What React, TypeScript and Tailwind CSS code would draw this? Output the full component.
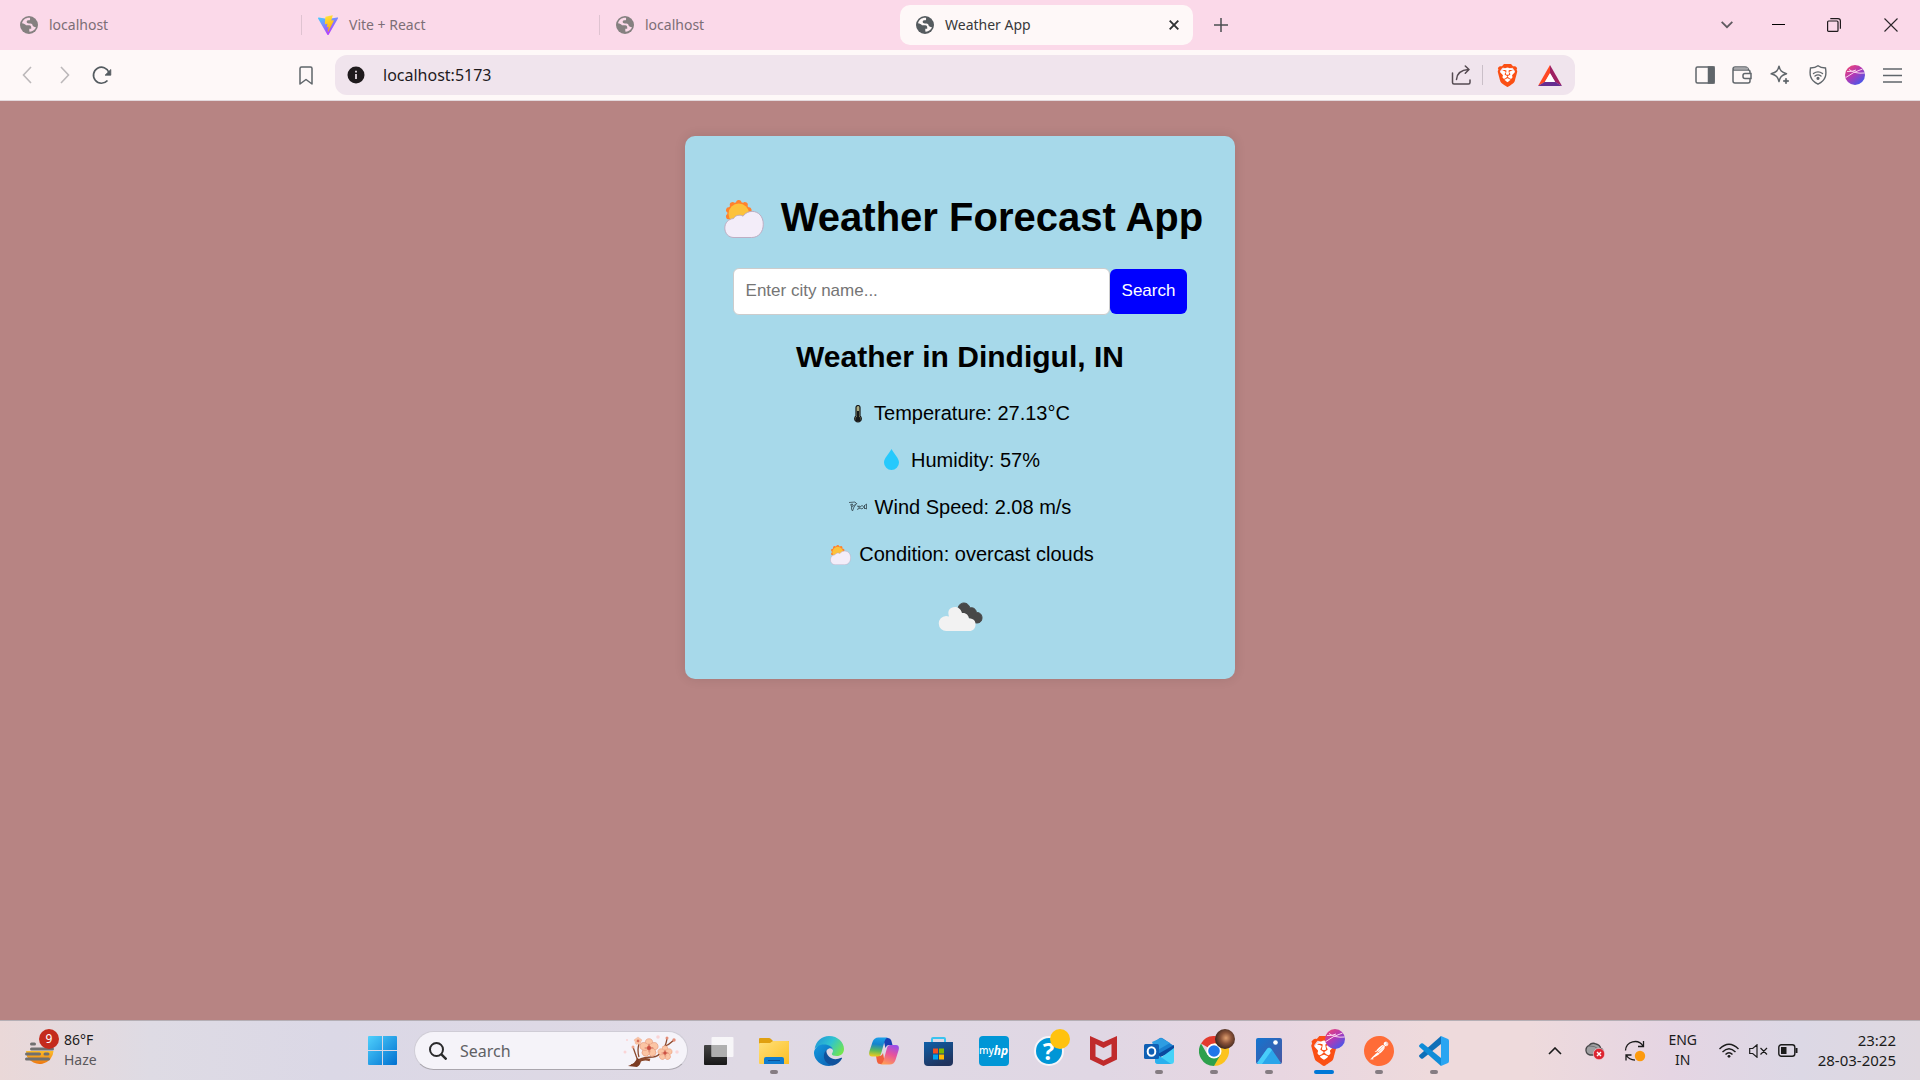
import React, { ReactNode } from "react";
import { SiBrave, SiPostman } from "react-icons/si";

const ui = "font-['Noto_Sans','Open_Sans',sans-serif]";
const arial = "font-['Liberation_Sans',Arial,sans-serif]";

function Globe({ land }: { land: string }) {
  return (
    <svg viewBox="0 0 18 18" className="size-[18px]" aria-hidden="true">
      <circle cx="9" cy="9" r="9" fill="currentColor" />
      <path
        d="M10 1.800C6 1.400 3 3.600 2 7.200c1.800.2 3.200.9 4 2h3.200c1.200 0 2 .8 2 2v1.600H9.300v2.800c3 .3 5.800-1.600 6.700-4.300-2-.3-3.300-.8-3.500-2.300-.2-1.300-1.500-1.500-3.500-1.500-1.600 0-2.300-.8-2.300-1.700 0-1.300 1.100-1.500 2.300-1.500 1 0 1.300-.6 1-2.500z"
        fill={land}
      />
    </svg>
  );
}

function ViteLogo() {
  return (
    <svg viewBox="0 0 32 32" className="size-5" aria-hidden="true">
      <defs>
        <linearGradient id="viteA" x1="0" y1="0" x2="0.6" y2="1">
          <stop offset="0" stopColor="#41d1ff" />
          <stop offset="1" stopColor="#bd34fe" />
        </linearGradient>
        <linearGradient id="viteB" x1="0.4" y1="0" x2="0.6" y2="1">
          <stop offset="0" stopColor="#ffea83" />
          <stop offset="0.1" stopColor="#ffdd35" />
          <stop offset="1" stopColor="#ffa800" />
        </linearGradient>
      </defs>
      <path fill="url(#viteA)" d="M31.9 5.6 17 31.4a1.2 1.2 0 0 1-2 0L.1 5.6c-.5-.9.3-1.900 1.200-1.700L16 6.500l14.700-2.700c1-.1 1.700.9 1.200 1.800z" />
      <path fill="url(#viteB)" d="M23 .3 12 2.500c-.2 0-.3.2-.3.4L11 14.300c0 .3.200.5.500.5l3-.7c.3-.1.600.2.500.5l-.9 4.400c-.1.300.2.600.5.500l1.900-.6c.3-.1.600.2.500.5l-1.400 6.900c-.1.400.5.700.7.300l9.200-17.800c.2-.3-.1-.600-.4-.500l-3.200.6c-.3.100-.600-.2-.500-.5L23.500.8c.1-.3-.2-.6-.5-.5z" />
    </svg>
  );
}

function Tab({ title, icon, active, last }: { title: string; icon: ReactNode; active?: boolean; last?: boolean }) {
  if (active) {
    return (
      <div className="ml-0.5 flex h-10 w-[293px] items-center rounded-[10px] bg-[#fef8f8] pl-4 pr-[11px]">
        <span className="text-[#555b5f]">{icon}</span>
        <span className="ml-[11px] text-sm text-[#38393b]">{title}</span>
        <button aria-label="Close tab" className="ml-auto flex size-4 items-center justify-center">
          <svg viewBox="0 0 10 10" className="size-2.5" stroke="#303234" strokeWidth="1.9">
            <path d="M.7.7 9.300 9.300M9.300.7.7 9.300" />
          </svg>
        </button>
      </div>
    );
  }
  return (
    <div className="flex h-10 w-[298px] items-center pl-4">
      <span className="text-[#858080]">{icon}</span>
      <span className="ml-[11px] text-sm text-[#7b6e76]">{title}</span>
      {!last && <span className="ml-auto h-5 w-px bg-[#dfc3d1]" />}
    </div>
  );
}

function BraveMark({ size }: { size: string }) {
  return (
    <span className={`relative flex items-center justify-center ${size}`}>
      <span className="absolute inset-[18%] rounded-full bg-white" />
      <SiBrave className="relative size-full text-[#fb4f14]" />
    </span>
  );
}

function Sphere({ className, id }: { className: string; id: string }) {
  return (
    <svg viewBox="0 0 20 20" className={className} aria-hidden="true">
      <defs>
        <linearGradient id={id} x1="0" y1="0" x2="0.8" y2="1">
          <stop offset="0" stopColor="#f8466a" />
          <stop offset="0.5" stopColor="#b339b4" />
          <stop offset="1" stopColor="#3c5af0" />
        </linearGradient>
      </defs>
      <circle cx="10" cy="10" r="10" fill={`url(#${id})`} />
      <path d="M.8 12.500Q8 7 17.500 4M4 4.500q6 4.500 15.500 3.500M2 6.500q5 .5 9-1.500" stroke="#fbd5ef" strokeWidth="1" fill="none" />
    </svg>
  );
}

function BrowserChrome() {
  return (
    <header className={ui}>
      <div className="flex h-[50px] items-center bg-[#fbd9e9] pl-1">
        <Tab title="localhost" icon={<Globe land="#fbd9e9" />} />
        <Tab title="Vite + React" icon={<ViteLogo />} />
        <Tab title="localhost" icon={<Globe land="#fbd9e9" />} last />
        <Tab title="Weather App" icon={<Globe land="#fef8f8" />} active />
        <button aria-label="New tab" className="ml-[21px]">
          <svg viewBox="0 0 14 14" className="size-3.5" stroke="#4b4d50" strokeWidth="1.500">
            <path d="M7 0v14M0 7h14" />
          </svg>
        </button>
        <div className="ml-auto flex items-center">
          <button aria-label="Search tabs" className="flex w-[46px] justify-center">
            <svg viewBox="0 0 14 9" className="h-2 w-3.5" fill="none" stroke="#5f5a60" strokeWidth="2">
              <path d="m1 1 6 6 6-6" />
            </svg>
          </button>
          <button aria-label="Minimize" className="flex w-14 justify-center">
            <span className="mb-0.5 h-px w-[13px] bg-black" />
          </button>
          <button aria-label="Restore" className="flex w-14 justify-center">
            <svg viewBox="0 0 14 14" className="size-3.5" fill="none" stroke="#1f1a1d" strokeWidth="1.200">
              <rect x=".6" y="3" width="10.400" height="10.400" rx="1" />
              <path d="M3.300.600h7.700a2.400 2.400 0 0 1 2.400 2.400v7.700" />
            </svg>
          </button>
          <button aria-label="Close" className="flex w-[58px] justify-center">
            <svg viewBox="0 0 14 14" className="size-3.5" stroke="#2b2529" strokeWidth="1.100">
              <path d="m.5.5 13 13M13.500.5l-13 13" />
            </svg>
          </button>
        </div>
      </div>

      <div className="flex h-[51px] items-center border-b border-[#e3d9dd] bg-[#fef8f8]">
        <button aria-label="Back" className="ml-2 flex w-[38px] justify-center">
          <svg viewBox="0 0 10 18" className="h-[18px] w-2.5" fill="none" stroke="#bcb8ba" strokeWidth="1.600">
            <path d="M9 1 1.500 9 9 17" />
          </svg>
        </button>
        <button aria-label="Forward" className="flex w-[38px] justify-center">
          <svg viewBox="0 0 10 18" className="h-[18px] w-2.5" fill="none" stroke="#bcb8ba" strokeWidth="1.600">
            <path d="M1 1l7.500 8L1 17" />
          </svg>
        </button>
        <button aria-label="Reload" className="flex w-9 justify-center">
          <svg viewBox="0 0 20 20" className="size-5" fill="none" stroke="#545b60" strokeWidth="1.700">
            <path d="M17 7.500A8 8 0 1 0 15.500 15.500" />
            <path d="M18.800 4.500v5.700h-5.700z" fill="#545b60" stroke="#545b60" strokeWidth=".8" strokeLinejoin="round" />
          </svg>
        </button>
        <button aria-label="Bookmark" className="ml-[174px] flex w-6 justify-center">
          <svg viewBox="0 0 14 19" className="h-[19px] w-3.5" fill="none" stroke="#5f656a" strokeWidth="1.500" strokeLinejoin="round">
            <path d="M1 2.500A1.500 1.500 0 0 1 2.500 1h9A1.500 1.500 0 0 1 13 2.500V18l-6-4.500L1 18z" />
          </svg>
        </button>
        <div className="ml-[17px] flex h-10 max-w-[1240px] flex-1 items-center rounded-xl bg-[#f0e4ed] pl-3 pr-2.5">
          <svg viewBox="0 0 18 18" className="size-[18px]" aria-hidden="true">
            <circle cx="9" cy="9" r="8.500" fill="#1f1a1d" />
            <path d="M9 8v5M9 4.800v1.700" stroke="#f0e4ed" strokeWidth="1.700" />
          </svg>
          <input
            aria-label="Address"
            defaultValue="localhost:5173"
            className="ml-[18px] min-w-0 flex-1 bg-transparent text-base text-[#1f1a1d] outline-none"
          />
          <button aria-label="Share">
            <svg viewBox="0 0 20 20" className="size-5" fill="none" stroke="#544a51" strokeWidth="1.500" strokeLinecap="round" strokeLinejoin="round">
              <path d="M1.500 8v9.500q0 1.500 1.500 1.500h14.500q1.500 0 1.500-1.500V15" />
              <path d="M5.500 14.500C6 8 10 5 17.500 4.500M14.300 1l3.700 3.500-3.700 3.700" />
            </svg>
          </button>
          <span className="mx-[11px] h-5 w-px bg-[#cabfc8]" />
          <button aria-label="Brave Shields" className="ml-[2px]">
            <BraveMark size="size-[23px]" />
          </button>
          <button aria-label="Brave Rewards" className="ml-[19px] mr-[3px]">
            <svg viewBox="0 0 24 21" className="h-[21px] w-6" aria-hidden="true">
              <path d="M12 0 0 21l7-4 5-8.500z" fill="#ff4724" />
              <path d="m12 0 12 21-7-4-5-8.500z" fill="#9e1f63" />
              <path d="M0 21h24l-7-4.200H7z" fill="#662d91" />
              <path d="M12 8 6.800 17h10.400z" fill="#fff" />
            </svg>
          </button>
        </div>
        <div className="ml-auto flex items-center pr-[9px] text-[#60666b]">
          <button aria-label="Sidebar" className="flex w-[37px] justify-center">
            <svg viewBox="0 0 20 18" className="h-[18px] w-5" fill="none" stroke="currentColor" strokeWidth="1.500">
              <rect x="1" y="1" width="18" height="16" rx="1.500" />
              <path d="M13.500 1H19v16h-5.500z" fill="currentColor" />
            </svg>
          </button>
          <button aria-label="Wallet" className="flex w-[38px] justify-center">
            <svg viewBox="0 0 20 18" className="h-[18px] w-5" fill="none" stroke="currentColor" strokeWidth="1.500">
              <path d="M1 3.500V15q0 2 2 2h13q2 0 2-2V6q0-2-2-2H3.500Q1 4 1 2.700T3 1h10q3 0 3.500 3" />
              <path d="M19 7.500h-6q-2 0-2 2v1q0 2 2 2h6z" fill="#fef8f8" />
              <path d="M2 2.500h14" strokeWidth="2" stroke="#a8a9ac" />
            </svg>
          </button>
          <button aria-label="Leo AI" className="flex w-[38px] justify-center">
            <svg viewBox="0 0 20 20" className="size-5" fill="none" stroke="currentColor" strokeWidth="1.500" strokeLinejoin="round">
              <path d="M9 1.200c1 4.500 2.500 6 7.500 7.600-5 1.500-6.500 3.200-7.500 7.800-1-4.600-2.700-6.300-7.800-7.800C6.300 7.200 8 5.700 9 1.200z" />
              <path d="M16 13c.5 2 1 2.500 3 3-2 .5-2.500 1-3 3-.5-2-1-2.500-3-3 2-.5 2.500-1 3-3z" fill="currentColor" strokeWidth=".8" />
            </svg>
          </button>
          <button aria-label="VPN" className="flex w-[37px] justify-center">
            <svg viewBox="0 0 18 20" className="h-5 w-[18px]" fill="none" stroke="currentColor" strokeWidth="1.400" strokeLinecap="round">
              <path d="M9 .8C7 2.500 4 3 1.500 3 .5 9 .5 15 9 19.200 17.500 15 17.500 9 16.500 3 14 3 11 2.500 9 .8z" />
              <path d="M4.500 8.500q4.500-3.200 9 0M6 11q3-2.200 6 0" />
              <circle cx="9" cy="13.300" r=".9" fill="currentColor" />
            </svg>
          </button>
          <button aria-label="Profile" className="flex w-[37px] justify-center">
            <Sphere className="size-5" id="sphereTop" />
          </button>
          <button aria-label="Menu" className="flex w-[38px] justify-center">
            <svg viewBox="0 0 19 15" className="h-[15px] w-[19px]" stroke="currentColor" strokeWidth="1.500">
              <path d="M0 1h19M0 7.500h19M0 14h19" />
            </svg>
          </button>
        </div>
      </div>
    </header>
  );
}

function SunCloud({ className }: { className: string }) {
  return (
    <svg viewBox="0 0 42 40" className={className} aria-hidden="true">
      <g fill="#ff822d">
        <circle cx="15.500" cy="14" r="12" />
        {[0, 36, 72, 108, 144, 180, 216, 252, 288, 324].map((a) => (
          <circle key={a} cx="15.500" cy="2.800" r="2.800" transform={`rotate(${a} 15.500 14)`} />
        ))}
      </g>
      <circle cx="15.500" cy="14.500" r="10.800" fill="#fcc23c" />
      <path
        d="M10.500 39.500C4.500 39.500.8 35 .8 29.500S4.500 20 10 19.500c2-3.500 6.500-4.500 10-2.500 2.500-3.500 6-5 9.500-5 7 0 11.800 5.500 11.800 13.500S36.500 39.500 29 39.500z"
        fill="#f3edf9"
        stroke="#bdabc0"
        strokeWidth="1"
      />
    </svg>
  );
}

function Row({ icon, children }: { icon: ReactNode; children: ReactNode }) {
  return (
    <p className="flex h-[27px] items-center justify-center text-xl">
      {icon}
      <span>{children}</span>
    </p>
  );
}

function WeatherCard() {
  return (
    <section className="flex w-[550px] flex-col items-center rounded-[10px] bg-[#a7d9ea] px-6 pb-[30px] pt-[57px] text-black shadow-[0_0_12px_rgba(0,0,0,0.1)]">
      <h1 className="flex h-12 items-center whitespace-nowrap pl-[7px] text-[40px] font-bold">
        <SunCloud className="mr-[17px] mt-1 h-[38px] w-10" />
        Weather Forecast App
      </h1>
      <form className="mt-[27px] flex items-center" onSubmit={(e) => e.preventDefault()}>
        <input
          aria-label="City name"
          placeholder="Enter city name..."
          className="h-[47px] w-[377px] rounded-md border border-[#ccc] bg-white px-3 pb-0.5 text-[17px] leading-5 outline-none placeholder:text-[#757575]"
        />
        <button className="h-[45px] rounded-md bg-[#0000ff] px-3 pb-0.5 text-[17px] text-white">Search</button>
      </form>
      <h2 className="mt-6 text-[30px] font-bold leading-9">Weather in Dindigul, IN</h2>
      <div className="mt-6 flex flex-col gap-5">
        <Row
          icon={
            <svg viewBox="0 0 8 18" className="ml-1 mr-3 mt-0.5 h-[18px] w-2" aria-hidden="true">
              <path d="M2 2.500a2 2 0 0 1 4 0V11a3.300 3.300 0 1 1-4 0z" fill="#a9aa80" stroke="#17191a" strokeWidth="1.200" />
              <path d="M4 6v7" stroke="#17191a" strokeWidth="2" />
              <circle cx="4" cy="14" r="2.600" fill="#17191a" />
            </svg>
          }
        >
          Temperature: 27.13°C
        </Row>
        <Row
          icon={
            <svg viewBox="0 0 15 21" className="ml-1 mr-3 h-[21px] w-[15px]" aria-hidden="true">
              <path d="M7.500 0C10 5 15 9 15 13.500a7.500 7.500 0 0 1-15 0C0 9 5 5 7.500 0z" fill="#26c9fc" />
            </svg>
          }
        >
          Humidity: 57%
        </Row>
        <Row
          icon={
            <svg viewBox="0 0 18 12" className="mr-2 h-3 w-[18px]" fill="none" stroke="#3f555e" strokeWidth=".9" aria-hidden="true">
              <path d="M0 1.500 6 1l1.500 1.500L5 4.500 2 6M1 4l3-.5M3 2.500 2.500 8l1 2L5 6l3-4M8 5l3 1 2-1.500 1.500 1L17.500 3v5l-3-1.500L13 8l-2-1-3 1.500M10 4.500v3M15.500 4v4" />
            </svg>
          }
        >
          Wind Speed: 2.08 m/s
        </Row>
        <Row icon={<SunCloud className="ml-1 mr-2 mt-0.5 h-5 w-[21px]" />}>Condition: overcast clouds</Row>
      </div>
      <svg viewBox="0 0 62 62" className="mt-5 size-[62px]" role="img" aria-label="overcast clouds">
        <path d="M29 23c0-4 2-7 6-7 3 0 5 2 6 5 3-1 6 1 6.500 4.500 4 0 5.500 2.500 5.500 5.500s-2 5-5 5c-3 0-5-1-6-4z" fill="#484848" stroke="#484848" />
        <path d="M17.500 44a7.500 7.500 0 0 1-.5-15c1 0 2 .2 3 .5C18 23.500 21 20 26 20c3.500 0 6 2.500 7 6 4-.5 6.500 2 7 5.500 5 0 6.500 2.500 6.500 6 0 4-2.500 6.500-6 6.500z" fill="#f2f2f2" />
      </svg>
    </section>
  );
}

function AppButton({ label, state, children }: { label: string; state?: "open" | "active"; children: ReactNode }) {
  return (
    <button aria-label={label} className="relative flex h-full w-[55px] items-center justify-center">
      {children}
      {state === "open" && <span className="absolute bottom-1.5 h-1 w-2 rounded-full bg-[#857c82]" />}
      {state === "active" && <span className="absolute bottom-1.5 h-1 w-5 rounded-full bg-[#0078d7]" />}
    </button>
  );
}

function Blossom({ x, y, r }: { x: number; y: number; r: number }) {
  return (
    <g transform={`translate(${x} ${y}) scale(${r})`}>
      {[0, 72, 144, 216, 288].map((a) => (
        <ellipse key={a} cx="0" cy="-3.400" rx="2.600" ry="3" transform={`rotate(${a})`} fill="#fbc5a4" stroke="#e9a184" strokeWidth=".5" />
      ))}
      <circle r="1.500" fill="#d9604c" />
      <path d="M0-3v6M-3 0h6" stroke="#b8403a" strokeWidth=".4" />
    </g>
  );
}

function Taskbar() {
  return (
    <footer
      className={`flex h-[60px] items-center border-t border-[#b5afb5] bg-[linear-gradient(90deg,#ead8d8_0px,#dedbe4_150px,#dbd8e6_330px,#dfd9e4_750px,#e0d7e4_1100px,#e8d6e1_1280px,#eedadc_1430px,#eedadc_1530px,#e5d5e3_1670px,#dcd8e5_1800px,#dfd8e0_1920px)] ${ui}`}
    >
      <button aria-label="Weather, 86 degrees, haze" className="flex h-full w-[355px] items-center pl-6 text-left">
        <span className="relative flex h-9 w-10">
          <svg viewBox="0 0 40 36" className="h-9 w-10" aria-hidden="true">
            <defs>
              <linearGradient id="haze" x1="0" y1="0" x2="0" y2="1">
                <stop offset="0" stopColor="#fcbc2a" />
                <stop offset="1" stopColor="#ee7810" />
              </linearGradient>
            </defs>
            <path d="M2 18h27.500a14 13.500 0 0 1-26.500 5.500z" fill="url(#haze)" />
            <g stroke="#707070" strokeWidth="3" strokeLinecap="round">
              <path d="M7.500 11h3M7.500 16h21M2.500 21h13M21 21h3M2.500 26h22" />
            </g>
          </svg>
          <span className="absolute left-[15px] top-[-4px] flex size-5 items-center justify-center rounded-full bg-[#c42b1c] text-xs text-white">9</span>
        </span>
        <span className="mb-0.5 flex flex-col text-sm leading-5 text-[#1b1b1b]">
          <span>86°F</span>
          <span className="text-[#5b585c]">Haze</span>
        </span>
      </button>

      <AppButton label="Start">
        <svg viewBox="0 0 29 29" className="size-[29px]">
          <defs>
            <linearGradient id="win" x1="0" y1="0" x2="1" y2="1">
              <stop offset="0" stopColor="#4fd0fc" />
              <stop offset="1" stopColor="#0070d0" />
            </linearGradient>
          </defs>
          <path fill="url(#win)" d="M1 0h13v14H0V1q0-1 1-1zM15 0h13q1 0 1 1v13H15zM0 15h14v14H1q-1 0-1-1zM15 15h14v13q0 1-1 1H15z" />
        </svg>
      </AppButton>
      <label className="ml-1 flex h-[39px] w-[274px] items-center overflow-hidden rounded-full border border-b-[#aaa6ae] border-[#cfccd6] bg-[#f5f3f9] pl-3.5 pr-2">
        <svg viewBox="0 0 18 18" className="size-[18px]" fill="none" stroke="#2a2a2c" strokeWidth="2" aria-hidden="true">
          <circle cx="7.500" cy="7.500" r="6.500" />
          <path d="m12.200 12.200 5.300 5.300" strokeWidth="2.400" />
        </svg>
        <input
          type="text"
          aria-label="Search"
          placeholder="Search"
          className="ml-[13px] w-32 flex-1 bg-transparent text-base outline-none placeholder:text-[#606064]"
        />
        <svg viewBox="0 0 56 32" className="h-8 w-14" fill="none" aria-hidden="true">
          <path d="M8 30q6-1 7-5 6-3 15-3M15 26q-3-8-5-14M16 22q-2-7 0-13M30 22q5 0 10-7M40 15q4-7 4-13M40 12q6-2 11-7" stroke="#8c4a2e" strokeWidth="1.300" />
          <path d="M5 31q8-3 9-8l4 2q0 5-4 7z" fill="#7c3c23" />
          <path d="M16 26q5-3 11-1" stroke="#8c4a2e" strokeWidth="2.400" />
          <Blossom x={26} y={13} r={1.45} />
          <Blossom x={42} y={18} r={1.15} />
          <Blossom x={15} y={6} r={0.6} />
          <circle cx="10" cy="12" r="1.500" fill="#f0a78e" />
          <circle cx="44" cy="3" r="1.500" fill="#e48d78" />
          <circle cx="51" cy="5" r="1.700" fill="#e48d78" />
          <g fill="#fad4d6">
            <circle cx="35" cy="2" r="1.800" />
            <circle cx="54" cy="17" r="1.700" />
            <circle cx="2" cy="17" r="1.500" />
            <circle cx="4" cy="5" r="1" />
          </g>
        </svg>
      </label>

      <div className="ml-[3px] flex h-full items-center">
        <AppButton label="Task view">
          <svg viewBox="0 0 30 30" className="size-[30px]">
            <defs>
              <linearGradient id="tvDark" x1="0" y1="0" x2="0" y2="1">
                <stop offset="0" stopColor="#454545" />
                <stop offset="1" stopColor="#181818" />
              </linearGradient>
            </defs>
            <rect x="0" y="9" width="23" height="20" rx="1" fill="url(#tvDark)" />
            <rect x="7.500" y="1" width="22" height="20" rx="1" fill="#fff" fillOpacity=".75" />
            <path d="M7.500 9H23v12H7.500z" fill="#a8a8a8" fillOpacity=".8" />
          </svg>
        </AppButton>
        <AppButton label="File Explorer" state="open">
          <svg viewBox="0 0 30 28" className="h-7 w-[30px]">
            <defs>
              <linearGradient id="fold" x1="0" y1="0" x2="1" y2="1">
                <stop offset="0" stopColor="#ffe07a" />
                <stop offset="1" stopColor="#fcbf24" />
              </linearGradient>
            </defs>
            <path d="M0 8V2q0-1 1-1h9q1 0 2 1l2 2h15q1 0 1 1v3z" fill="#e0a010" />
            <path d="M0 7q0-1 1-1h10l3-2h15q1 0 1 1v22H1q-1 0-1-1z" fill="url(#fold)" />
            <path d="M5 27v-5q0-2 2-2h16q2 0 2 2v5z" fill="#0f7cd0" />
            <path d="M9 23.500h12" stroke="#0a4f96" />
          </svg>
        </AppButton>
        <AppButton label="Edge">
          <svg viewBox="0 0 30 30" className="size-[30px]">
            <defs>
              <linearGradient id="edgeTop" x1="0" y1="0.200" x2="1" y2="0.700">
                <stop offset="0" stopColor="#2196d8" />
                <stop offset="0.500" stopColor="#2fc3d0" />
                <stop offset="1" stopColor="#74e64c" />
              </linearGradient>
              <linearGradient id="edgeLow" x1="0" y1="0" x2="1" y2="1">
                <stop offset="0" stopColor="#149be0" />
                <stop offset="1" stopColor="#0b5cae" />
              </linearGradient>
            </defs>
            <path d="M.5 13C2 5 8 0 15 0c9 0 15 6.500 15 13 0 4.500-3.300 7-7.200 7-3.300 0-5-1-5-2 0-.8 1.200-1.400 1.200-3.500C19 11 15 9.500 11 9.500 6 9.500 2 11 .5 13z" fill="url(#edgeTop)" />
            <path d="M0 16C1 11 5 8.500 10 8.500c5 0 9 2.500 9 6-.5-2-2.500-2.500-4-2-5 2-5 9 0 13 2 2 5 2.500 7 2.300C19 29.500 17 30 15 30 6 30-.5 23 0 16z" fill="url(#edgeLow)" />
            <path d="M12.500 14C8 18 9 28 19 29.500c4-.8 7-3.500 9-7 .3-.6-.3-1-.8-.7-4 2-9 2-12-1-2.500-2.500-3-4.500-2.700-6.800z" fill="#10529c" />
          </svg>
        </AppButton>
        <AppButton label="Copilot">
          <svg viewBox="0 0 30 28" className="h-7 w-[30px]">
            <defs>
              <linearGradient id="cpA" x1="0.400" y1="0" x2="0.300" y2="1">
                <stop offset="0" stopColor="#1a9fe8" />
                <stop offset="0.350" stopColor="#1583cd" />
                <stop offset="0.700" stopColor="#5fba58" />
                <stop offset="1" stopColor="#f2cc1c" />
              </linearGradient>
              <linearGradient id="cpB" x1="0.700" y1="0" x2="0.300" y2="1">
                <stop offset="0" stopColor="#9b4fe8" />
                <stop offset="0.450" stopColor="#e8539c" />
                <stop offset="1" stopColor="#ff9c54" />
              </linearGradient>
            </defs>
            <path d="M14 1h5q2.500 0 3.300 2.500L23.500 8h-4q-2 0-3 3z" fill="#1740b4" />
            <path d="M16 27h-5q-2.500 0-3-2.500L7 19h4q2 0 3-3z" fill="#f0603c" />
            <path d="M9.500.500H19q-2.500.5-3.500 4L12 17q-.7 2.500-3.500 2.500H3Q-1 19.500.5 14L3.500 5q1.500-4.500 6-4.500z" fill="url(#cpA)" />
            <path d="M20.500 27.500H11q2.500-.5 3.500-4L18 11q.7-3 3.500-3H27q4 0 2.500 5.500l-3 9.500q-1.500 4.500-6 4.500z" fill="url(#cpB)" />
          </svg>
        </AppButton>
        <AppButton label="Microsoft Store">
          <svg viewBox="0 0 29 30" className="h-[30px] w-[29px]">
            <defs>
              <linearGradient id="store" x1="0" y1="0" x2="0.500" y2="1">
                <stop offset="0" stopColor="#0f5fa8" />
                <stop offset="1" stopColor="#20345e" />
              </linearGradient>
            </defs>
            <path d="M8 6V3q0-1 1-1h11q1 0 1 1v3" fill="none" stroke="#3ac3ef" strokeWidth="2" />
            <path d="M0 6h29v20q0 4-4 4H4q-4 0-4-4z" fill="url(#store)" />
            <path d="M9 12.500h5v5H9z" fill="#f25022" />
            <path d="M15 12.500h5v5h-5z" fill="#7fba00" />
            <path d="M9 18.500h5v5H9z" fill="#00a4ef" />
            <path d="M15 18.500h5v5h-5z" fill="#ffb900" />
          </svg>
        </AppButton>
        <AppButton label="myHP">
          <span className="flex size-[30px] items-center justify-center rounded-sm bg-[#0096d6] text-[10px] font-medium text-white">
            my<i className="text-xs font-bold">hp</i>
          </span>
        </AppButton>
        <AppButton label="Help">
          <span className="flex size-[30px] items-center justify-center rounded-full border-2 border-[#f6f4f8] bg-[#0096d6] text-2xl font-bold text-white">?</span>
          <span className="absolute right-1.5 top-2 size-5 rounded-full bg-[#ffc20e]" />
        </AppButton>
        <AppButton label="McAfee">
          <svg viewBox="0 0 27 30" className="h-[30px] w-[27px]">
            <path d="M0 0 13.500 6 27 0v23.500L13.500 30 0 23.500zM5.500 8v12.500l8 4 8-4V8l-8 4z" fillRule="evenodd" fill="#c02b2c" />
          </svg>
        </AppButton>
        <AppButton label="Outlook" state="open">
          <svg viewBox="0 0 30 28" className="h-7 w-[30px]">
            <path d="M5 10 15 1.500q2-1.500 4 0L30 9v6L14 20z" fill="#1a80d0" />
            <path d="m30 8-16 9v4l16-7z" fill="#0b4a9e" />
            <path d="m8 5 9-4 9 5-14 8z" fill="#2e9de2" />
            <path d="M30 11v13q0 3-3 3H14q-2 0-3-2z" fill="#46d2f8" />
            <path d="m11 16 16 11H14q-3 0-3-3z" fill="#2ab0ee" />
            <rect y="7" width="15" height="15" rx="1.500" fill="#0f5fb4" />
            <ellipse cx="7.500" cy="14.500" rx="3.800" ry="4.300" fill="none" stroke="#fff" strokeWidth="2" />
          </svg>
        </AppButton>
        <AppButton label="Chrome" state="open">
          <svg viewBox="0 0 30 30" className="size-[30px]">
            <path d="M15 15 2 7.500A15 15 0 0 1 28 7.500H15z" fill="#e33b2e" />
            <path d="M15 15h6.500L15 30a15 15 0 0 0 13-22.500H15z" fill="#fcc31e" />
            <path d="M2 7.500A15 15 0 0 0 15 30l6.500-11.200L8.500 18.800z" fill="#2da04c" />
            <circle cx="15" cy="15" r="7.500" fill="#fff" />
            <circle cx="15" cy="15" r="5.800" fill="#1f76e8" />
          </svg>
          <span className="absolute right-1.5 top-2 size-5 rounded-full bg-[radial-gradient(circle_at_55%_45%,#e0a070_0%,#8a5238_35%,#35231d_75%)]" />
        </AppButton>
        <AppButton label="Photos" state="open">
          <svg viewBox="0 0 26 26" className="size-[26px]">
            <defs>
              <linearGradient id="photo" x1="0" y1="0" x2="1" y2="1">
                <stop offset="0" stopColor="#1475d0" />
                <stop offset="1" stopColor="#4a55a0" />
              </linearGradient>
            </defs>
            <rect width="26" height="26" rx="2" fill="url(#photo)" />
            <path d="m1 25 10-14q2-2.500 4.500 0L25 25q-.5 1-2 1H3q-1.500 0-2-1z" fill="#2ba5ea" />
            <path d="m1 25 10-14q2-2.500 4 0l1 1L6 26H3q-1.500 0-2-1z" fill="#48cdfa" />
            <circle cx="19.500" cy="4.500" r="2.300" fill="#fff" />
          </svg>
        </AppButton>
        <AppButton label="Brave" state="active">
          <BraveMark size="size-[30px]" />
          <span className="absolute right-1.5 top-2 flex">
            <Sphere className="size-5" id="sphereTask" />
          </span>
        </AppButton>
        <AppButton label="Postman" state="open">
          <span className="relative flex size-[30px]">
            <span className="absolute inset-1 rounded-full bg-white" />
            <SiPostman className="relative size-full text-[#ff6c37]" />
          </span>
        </AppButton>
        <AppButton label="Visual Studio Code" state="open">
          <svg viewBox="0 0 30 30" className="size-[30px]">
            <path d="M22 0v8L4 22.500q-1 .6-2 0L.5 21q-1-1 0-2z" fill="#0f6fb8" />
            <path d="M22 30v-8L4 7.500q-1-.6-2 0L.5 9q-1 1 0 2z" fill="#0f8cd8" />
            <path d="m22 0 7 3q1 .5 1 2v20q0 1.500-1 2l-7 3z" fill="#2aa5f2" />
          </svg>
        </AppButton>
      </div>

      <div className="ml-auto flex h-full items-center pr-6 text-[#1b1b1b]">
        <button aria-label="Show hidden icons" className="flex w-10 justify-center">
          <svg viewBox="0 0 14 8" className="h-2 w-3.5" fill="none" stroke="currentColor" strokeWidth="1.600">
            <path d="m1 7 6-6 6 6" />
          </svg>
        </button>
        <button aria-label="OneDrive" className="flex w-10 justify-center">
          <svg viewBox="0 0 22 18" className="h-[18px] w-[22px]">
            <path d="M6 13a5 5 0 0 1-1-9.500Q8 0 12 2q4 1 4.500 4 3 1 2.500 4.500L14 13z" fill="#a0a0a2" stroke="#48484a" strokeWidth="1.300" />
            <path d="M5 4q5-1 11 4" stroke="#707072" fill="none" />
            <circle cx="15" cy="12" r="5.700" fill="#dc2430" stroke="#f0dce4" strokeWidth=".6" />
            <path d="m13 10 4 4m0-4-4 4" stroke="#fff" strokeWidth="1.400" />
          </svg>
        </button>
        <button aria-label="Updates" className="flex w-10 justify-center">
          <svg viewBox="0 0 22 22" className="size-[22px]" fill="none" stroke="currentColor" strokeWidth="1.300">
            <path d="M1.500 10.500A9.500 9.500 0 0 1 19 6M19.500 1v5.500H14M2 20.500V15h5.500M2.500 15.500Q5 19.500 11 20.200" />
            <circle cx="16" cy="16" r="5.200" fill="#fc9a0e" stroke="none" />
          </svg>
        </button>
        <button className="mb-0.5 flex w-14 flex-col items-center text-sm leading-5">
          <span>ENG</span>
          <span>IN</span>
        </button>
        <button aria-label="Network, sound and battery" className="ml-2 flex items-center gap-2.5">
          <svg viewBox="0 0 20 15" className="h-[15px] w-5" fill="none" stroke="currentColor" strokeWidth="1.400">
            <path d="M.5 6q9.500-9.500 19 0M3.500 9q6.500-6.500 13 0M6.500 11.500q3.500-3.500 7 0" />
            <circle cx="10" cy="13.300" r="1.400" fill="currentColor" stroke="none" />
          </svg>
          <svg viewBox="0 0 19 14" className="h-3.5 w-[19px]" fill="none" stroke="currentColor" strokeWidth="1.200">
            <path d="M.7 4.500h3L8 .8v12.400L3.700 9.500h-3zM11.500 4l6.500 6.500M18 4l-6.500 6.500" />
          </svg>
          <svg viewBox="0 0 20 13" className="h-[13px] w-5" fill="none" stroke="currentColor" strokeWidth="1.400">
            <rect x=".8" y=".8" width="16" height="11.400" rx="2.500" />
            <path d="M3 3h5.500v7H3z" fill="currentColor" stroke="none" />
            <path d="M18.500 4v5" strokeWidth="2" />
          </svg>
        </button>
        <button className="mb-0.5 ml-5 flex flex-col items-end text-[15px] leading-5">
          <span>23:22</span>
          <span>28-03-2025</span>
        </button>
      </div>
    </footer>
  );
}

export default function App() {
  return (
    <div className="flex min-h-screen flex-col">
      <BrowserChrome />
      <main className={`flex flex-1 flex-col items-center bg-[#b78483] pt-[35px] ${arial}`}>
        <WeatherCard />
      </main>
      <Taskbar />
    </div>
  );
}
